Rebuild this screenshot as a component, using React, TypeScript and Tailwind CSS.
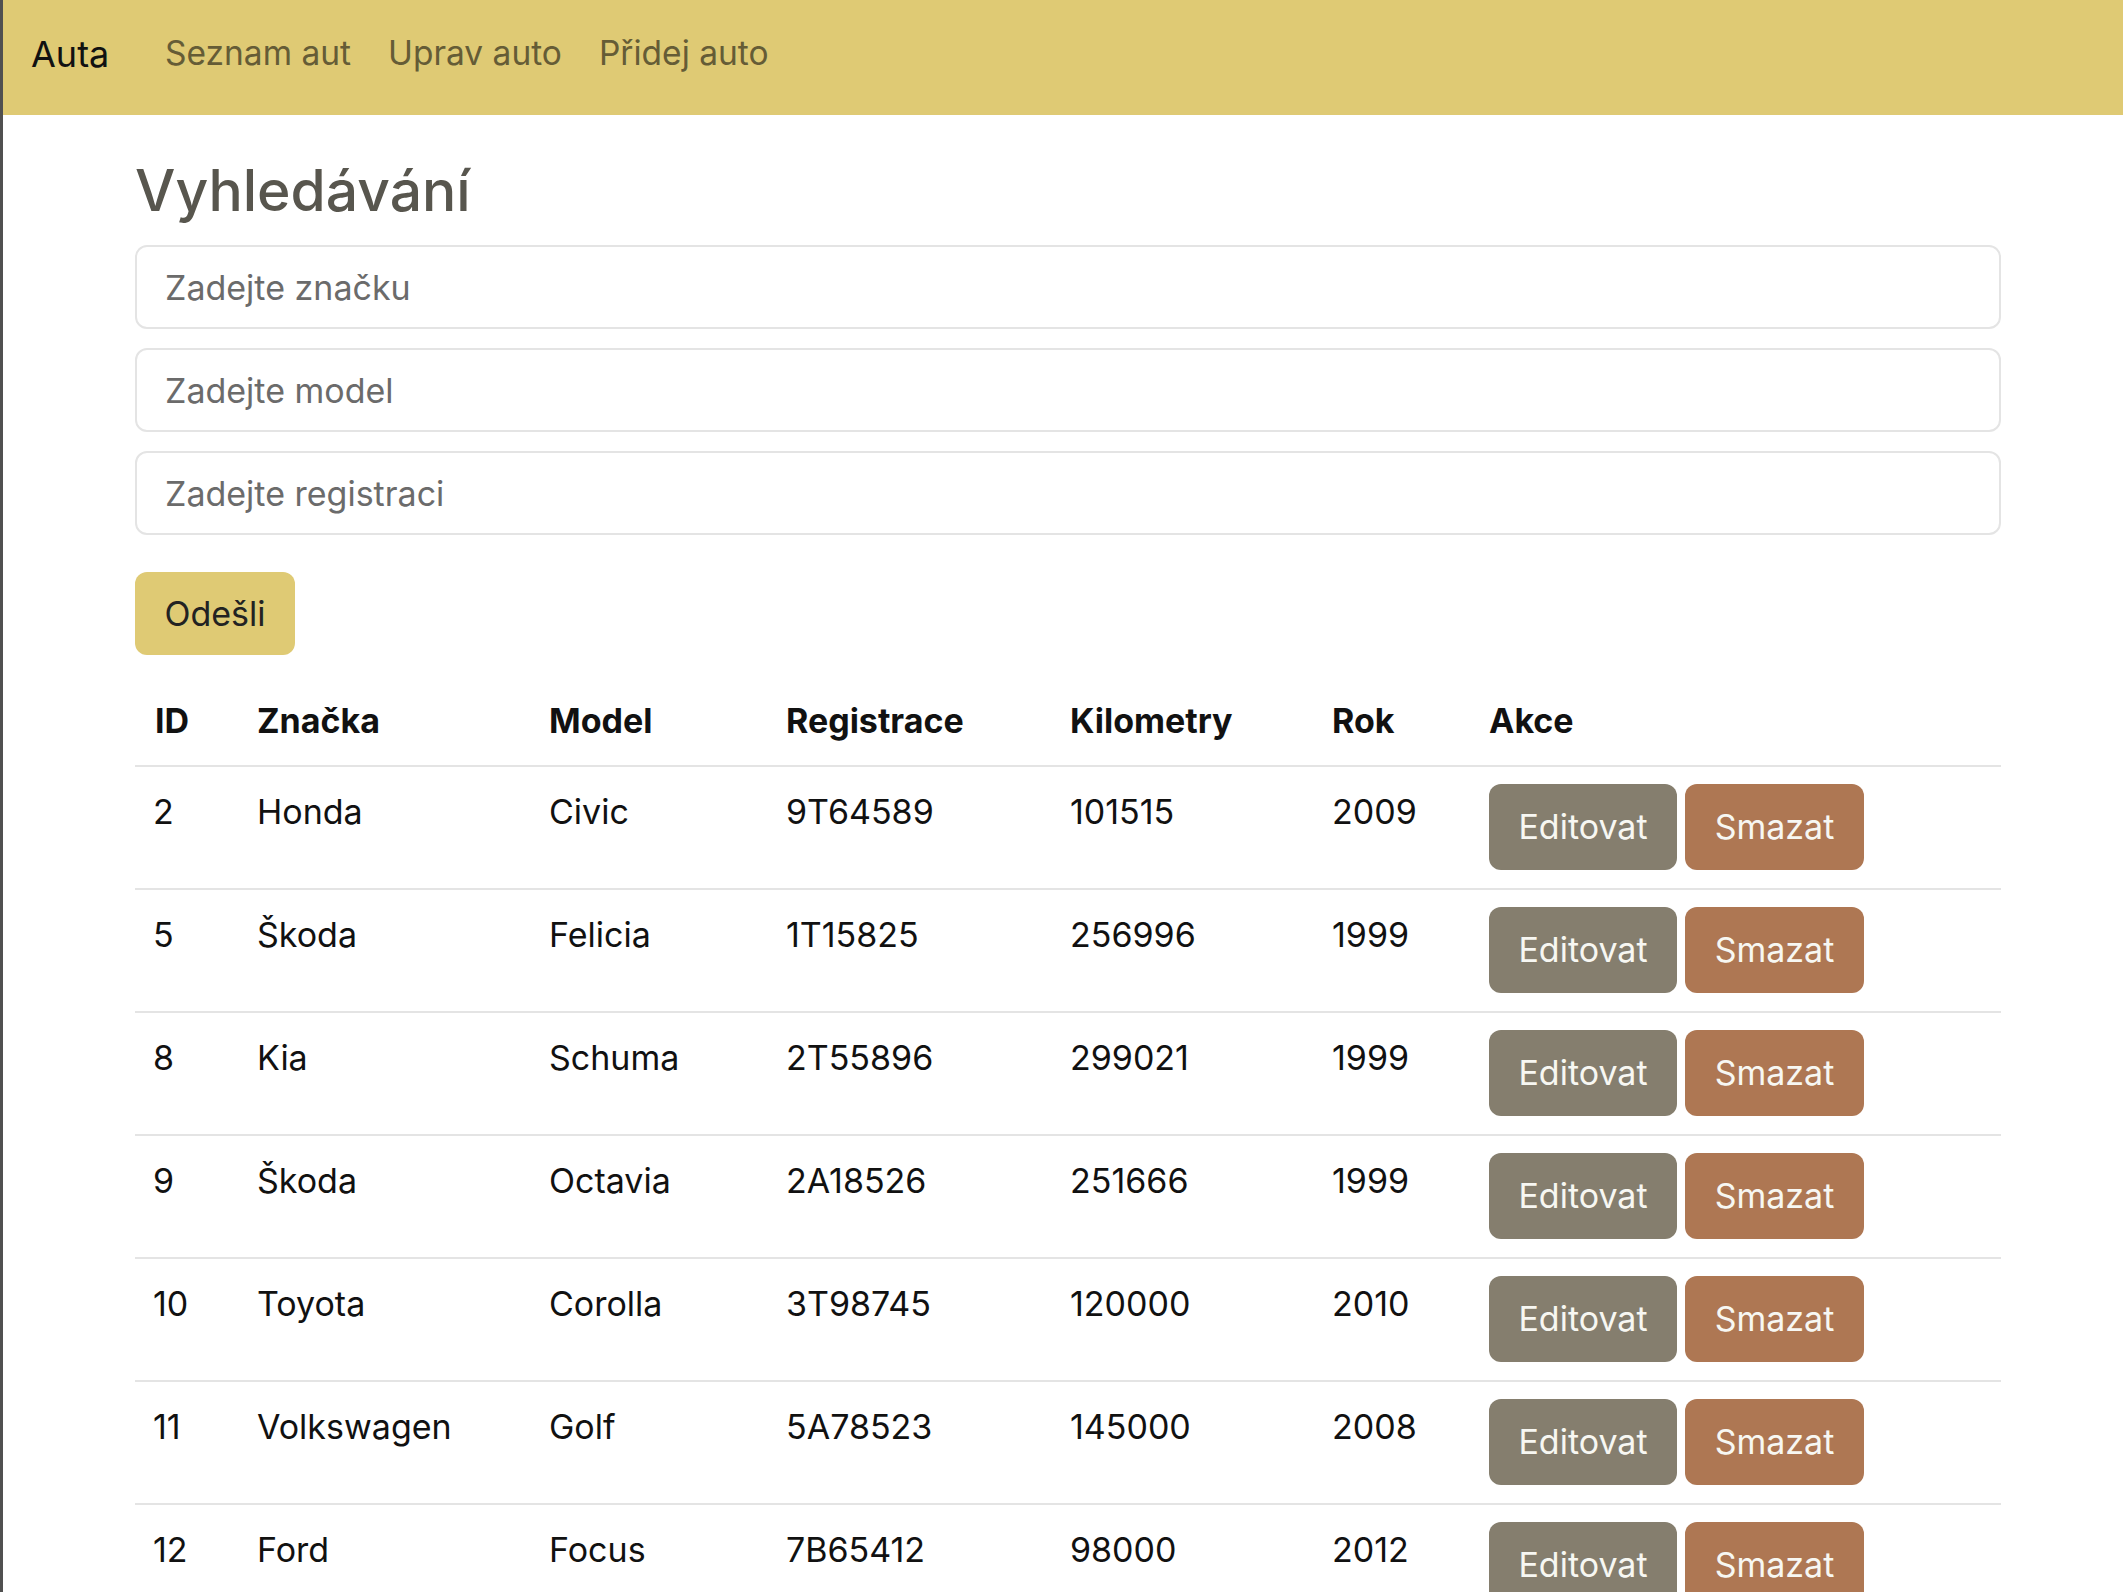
const cars = [
  { id: 2, brand: "Honda", model: "Civic", reg: "9T64589", km: 101515, year: 2009 },
  { id: 5, brand: "Škoda", model: "Felicia", reg: "1T15825", km: 256996, year: 1999 },
  { id: 8, brand: "Kia", model: "Schuma", reg: "2T55896", km: 299021, year: 1999 },
  { id: 9, brand: "Škoda", model: "Octavia", reg: "2A18526", km: 251666, year: 1999 },
  { id: 10, brand: "Toyota", model: "Corolla", reg: "3T98745", km: 120000, year: 2010 },
  { id: 11, brand: "Volkswagen", model: "Golf", reg: "5A78523", km: 145000, year: 2008 },
  { id: 12, brand: "Ford", model: "Focus", reg: "7B65412", km: 98000, year: 2012 },
];

const headers = ["ID", "Značka", "Model", "Registrace", "Kilometry", "Rok", "Akce"];

export default function App() {
  return (
    <div className="h-[1592px] overflow-hidden bg-white border-l-[3px] border-[#505050] font-['Inter',sans-serif] text-[#111]">
      {/* Navbar */}
      <nav className="h-[115px] bg-[#dfca74] flex items-center pl-[28px] pb-[7px]">
        <a className="w-[134px] text-[36px] text-[#111] leading-none">Auta</a>
        <div className="flex gap-[37px] text-[33.5px] text-[#655c36] leading-none">
          <a>Seznam aut</a>
          <a>Uprav auto</a>
          <a>Přidej auto</a>
        </div>
      </nav>

      <main className="ml-[132px] w-[1866px]">
        <h2 className="mt-[42px] text-[57px] font-medium leading-[1.2] text-[#58564e]">Vyhledávání</h2>

        {/* Search form */}
        <div className="mt-[20px] flex flex-col gap-[19px]">
          {["Zadejte značku", "Zadejte model", "Zadejte registraci"].map((p) => (
            <input
              key={p}
              placeholder={p}
              className="h-[84px] w-full rounded-[12px] border-2 border-[#e4e4e4] pl-[28px] text-[34px] placeholder:text-[#6b6b6b] outline-none"
            />
          ))}
        </div>
        <button className="mt-[37px] h-[83px] w-[160px] rounded-[12px] bg-[#dfca74] text-[34px] text-[#222]">
          Odešli
        </button>

        {/* Table */}
        <table className="mt-[21px] w-full table-fixed border-collapse text-[34px] leading-[56px]">
          <colgroup>
            <col className="w-[102px]" />
            <col className="w-[292px]" />
            <col className="w-[237px]" />
            <col className="w-[284px]" />
            <col className="w-[262px]" />
            <col className="w-[157px]" />
            <col />
          </colgroup>
          <thead>
            <tr className="border-b-2 border-[#e4e4e4]">
              {headers.map((h) => (
                <th key={h} className="text-left font-bold pl-[20px] pt-[17px] pb-[16px]">
                  {h}
                </th>
              ))}
            </tr>
          </thead>
          <tbody>
            {cars.map((c) => (
              <tr key={c.id} className="border-b-2 border-[#e4e4e4] align-top">
                <td className="pl-[18px] pt-[17px] pb-[18px]">{c.id}</td>
                <td className="pl-[20px] pt-[17px]">{c.brand}</td>
                <td className="pl-[20px] pt-[17px]">{c.model}</td>
                <td className="pl-[20px] pt-[17px]">{c.reg}</td>
                <td className="pl-[20px] pt-[17px]">{c.km}</td>
                <td className="pl-[20px] pt-[17px]">{c.year}</td>
                <td className="pl-[20px] pt-[17px] pb-[18px]">
                  <div className="flex gap-[8px]">
                    <button className="h-[86px] w-[188px] rounded-[12px] bg-[#857e6e] text-[#f7f7f2]">Editovat</button>
                    <button className="h-[86px] w-[179px] rounded-[12px] bg-[#ae7753] text-[#f7f7f2]">Smazat</button>
                  </div>
                </td>
              </tr>
            ))}
          </tbody>
        </table>
      </main>
    </div>
  );
}
